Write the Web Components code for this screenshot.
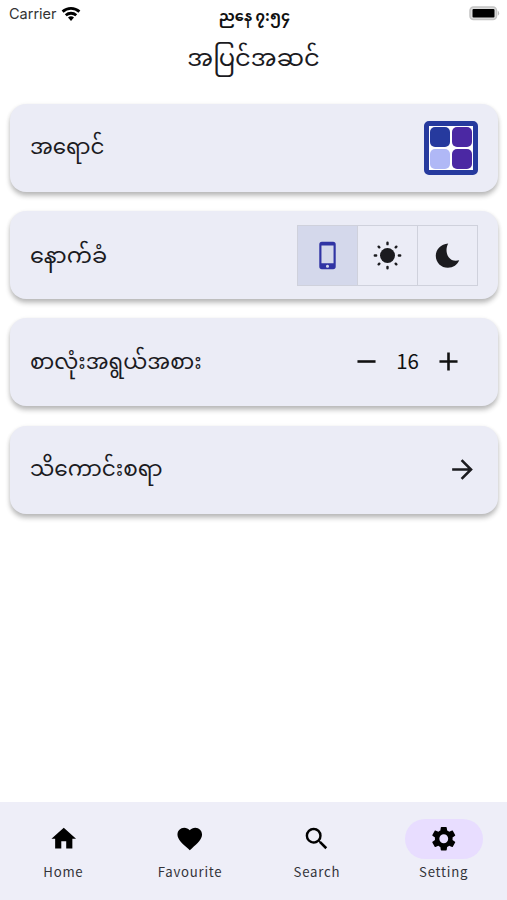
<!DOCTYPE html>
<html lang="my">
<head>
<meta charset="utf-8">
<title>Settings</title>
<style>
  html, body { margin: 0; height: 100%; }
  body {
    background: #fff;
    color: #1b1b1f;
    font-family: "Noto Sans CJK SC", "Noto Sans Myanmar", "Noto Sans", sans-serif;
  }
</style>
</head>
<body>
<settings-app></settings-app>

<script>
var ICONS = {
  home: '<path d="M10 20v-6h4v6h5v-8h3L12 3 2 12h3v8z"/>',
  heart: '<path d="M12 21.35l-1.45-1.32C5.4 15.36 2 12.28 2 8.5 2 5.42 4.42 3 7.5 3c1.74 0 3.41.81 4.5 2.09C13.09 3.81 14.76 3 16.5 3 19.58 3 22 5.42 22 8.5c0 3.78-3.4 6.86-8.55 11.54L12 21.35z"/>',
  search: '<path d="M15.5 14h-.79l-.28-.27A6.47 6.47 0 0 0 16 9.5 6.5 6.5 0 1 0 9.5 16c1.61 0 3.09-.59 4.23-1.57l.27.28v.79l5 4.99L20.49 19l-4.99-5zm-6 0C7.01 14 5 11.99 5 9.5S7.01 5 9.5 5 14 7.01 14 9.5 11.99 14 9.5 14z"/>',
  gear: '<path d="M19.14 12.94c.04-.3.06-.61.06-.94 0-.32-.02-.64-.07-.94l2.03-1.58c.18-.14.23-.41.12-.61l-1.92-3.32c-.12-.22-.37-.29-.59-.22l-2.39.96c-.5-.38-1.03-.7-1.62-.94l-.36-2.54c-.04-.24-.24-.41-.48-.41h-3.84c-.24 0-.43.17-.47.41l-.36 2.54c-.59.24-1.13.57-1.62.94l-2.39-.96c-.22-.08-.47 0-.59.22L2.74 8.87c-.12.21-.08.47.12.61l2.03 1.58c-.05.3-.09.63-.09.94s.02.64.07.94l-2.03 1.58c-.18.14-.23.41-.12.61l1.92 3.32c.12.22.37.29.59.22l2.39-.96c.5.38 1.03.7 1.62.94l.36 2.54c.05.24.24.41.48.41h3.84c.24 0 .44-.17.47-.41l.36-2.54c.59-.24 1.13-.56 1.62-.94l2.39.96c.22.08.47 0 .59-.22l1.92-3.32c.12-.22.07-.47-.12-.61l-2.01-1.58zM12 15.6A3.6 3.6 0 1 1 12 8.4a3.6 3.6 0 0 1 0 7.2z"/>',
  phone: '<path fill-rule="evenodd" d="M7.400 .7h9.200A2.200 2.200 0 0 1 18.800 2.900v18.200a2.200 2.200 0 0 1-2.200 2.200H7.400A2.200 2.200 0 0 1 5.200 21.100V2.900A2.200 2.200 0 0 1 7.400 .7zM7 3.800v14.700h10V3.800zM12 19.600a1.300 1.300 0 1 0 0 2.600 1.300 1.300 0 0 0 0-2.600z"/>',
  sun: '<circle cx="12" cy="12" r="6.200"/><g fill="none" stroke="currentColor" stroke-width="2" stroke-linecap="round"><path d="M12 1.500v1.100M12 21.400v1.100M1.500 12h1.100M21.400 12h1.100M4.700 4.700l.5.500M18.800 18.800l.5.500M4.700 19.300l.5-.5M18.800 5.200l.5-.5"/></g>',
  moon: '<path d="M12.600 2C6.500 2.400 2.300 6.900 2.300 12.200c0 5.700 4.500 10 10 10 4.400 0 8-2.600 9.400-6.200-3.500 1-6.700.2-8.700-2.500C10.700 10.400 10.600 5.500 12.600 2z"/>',
  minus: '<path d="M5 11h14v2H5z"/>',
  plus: '<path d="M11 5h2v6h6v2h-6v6h-2v-6H5v-2h6z"/>',
  arrow: '<path d="M12 4l-1.410 1.410L16.170 11H4v2h12.170l-5.580 5.590L12 20l8-8z"/>',
  wifi: '<path d="M12 20.300l3.600-4a5.400 5.400 0 0 0-7.200 0z"/><g fill="none" stroke="currentColor" stroke-width="3.400"><path d="M1.900 9.100a15.200 15.200 0 0 1 20.200 0M5.700 13.500a9.600 9.600 0 0 1 12.600 0"/></g>'
};

function define(name, html) {
  var tmpl = document.createElement("template");
  tmpl.innerHTML = html;
  customElements.define(name, class extends HTMLElement {
    constructor() {
      super();
      this.attachShadow({ mode: "open" }).appendChild(tmpl.content.cloneNode(true));
    }
  });
}

class AppIcon extends HTMLElement {
  connectedCallback() {
    if (!this.shadowRoot) this.attachShadow({ mode: "open" });
    this.shadowRoot.innerHTML = `
      <style>
        :host { display: block; width: var(--size, 29.5px); height: var(--size, 29.5px); flex: none; }
        svg { display: block; width: 100%; height: 100%; fill: currentColor; }
      </style>
      <svg viewBox="0 0 24 24">${ICONS[this.getAttribute("name")]}</svg>`;
  }
}
customElements.define("app-icon", AppIcon);

define("status-bar", `
<style>
  :host {
    display: grid;
    grid-template-columns: 1fr auto 1fr;
    height: 26px;
    align-items: center;
    padding: 0 7px 0 9px;
    box-sizing: border-box;
    color: #111;
  }
  .carrier { display: flex; align-items: center; gap: 4px; font: 14.5px/20px Inter, sans-serif; color: #333; padding-top: 1px; }
  .carrier app-icon { --size: 20px; color: #000; }
  .time { font-size: 14.7px; line-height: 20px; font-weight: 700; padding-top: 4px; }
  .battery { justify-self: end; width: 31px; height: 15px; }
</style>
<div class="carrier"><span>Carrier</span><app-icon name="wifi"></app-icon></div>
<div class="time">ညနေ ၇:၅၄</div>
<svg class="battery" viewBox="0 0 31 15">
  <rect x="1" y="1" width="26.500" height="12.500" rx="3.500" fill="#ddd" stroke="#c4c4c4" stroke-width="1.500"/>
  <rect x="3.500" y="3" width="22" height="8.500" rx="1" fill="#000"/>
  <path d="M28.800 4.800a3 3 0 0 1 0 5z" fill="#bbb"/>
</svg>
`);

define("setting-card", `
<style>
  :host {
    display: flex;
    align-items: center;
    justify-content: space-between;
    height: 88px;
    box-sizing: border-box;
    padding: 0 20px;
    border-radius: 16px;
    background: #ebecf6;
    box-shadow: 0 4px 5px rgba(0, 0, 0, .24), 0 1px 4px rgba(0, 0, 0, .08);
  }
  .label { font-size: var(--label-size, 21.400px); line-height: 36px; white-space: nowrap; padding-bottom: 5px; }
</style>
<div class="label"><slot></slot></div>
<slot name="control"></slot>
`);

define("color-palette", `
<style>
  :host {
    display: grid;
    grid-template-columns: 20px 20px;
    grid-auto-rows: 20px;
    gap: 2px;
    place-content: center;
    width: 54px;
    height: 54px;
    box-sizing: border-box;
    border: 5px solid #263a9e;
    border-radius: 5px;
    background: #fff;
  }
  i { border-radius: 5px; background: #4b28a3; }
  .a { background: #263a9e; }
  .c { background: #b0b8f6; }
</style>
<i class="a"></i><i></i><i class="c"></i><i></i>
`);

define("theme-switch", `
<style>
  :host { display: flex; width: 181px; height: 61px; box-sizing: border-box; border: 1px solid #cfd1dc; }
  div { flex: 1; display: flex; align-items: center; justify-content: center; padding-right: 1px; }
  div + div { border-left: 1px solid #cfd1dc; }
  .on { background: #d4d8eb; color: #3034a4; }
  app-icon { --size: 29px; }
</style>
<div class="on"><app-icon name="phone"></app-icon></div>
<div><app-icon name="sun"></app-icon></div>
<div><app-icon name="moon"></app-icon></div>
`);

define("font-stepper", `
<style>
  :host { display: flex; align-items: center; gap: 14px; padding: 0 14px 1px 0; color: #111; }
  app-icon { --size: 31px; }
  span { font-size: 20.5px; line-height: 30px; padding-bottom: 4px; }
</style>
<app-icon name="minus"></app-icon><span>16</span><app-icon name="plus"></app-icon>
`);

define("nav-item", `
<style>
  :host { flex: 1; display: flex; flex-direction: column; align-items: center; color: #000; }
  .pill { width: 78px; height: 40px; border-radius: 20px; display: flex; align-items: center; justify-content: center; }
  :host([active]) .pill { background: #e8ddff; }
  .text { margin-top: 3px; font-size: 13.2px; line-height: 20px; letter-spacing: .75px; color: #333339; }
</style>
<div class="pill"><slot name="icon"></slot></div>
<div class="text"><slot></slot></div>
`);

define("settings-app", `
<style>
  :host { display: flex; flex-direction: column; height: 100vh; }
  h1 { margin: 0; height: 77.7px; font-size: 24.2px; font-weight: 400; line-height: 59px; text-align: center; }
  main { flex: 1; display: flex; flex-direction: column; gap: 19.400px; padding: 0 9px 0 10px; }
  nav { display: flex; height: 98px; padding-top: 17px; box-sizing: border-box; background: #eeeef8; }
  .arrow { --size: 31px; }
</style>
<status-bar></status-bar>
<h1>အပြင်အဆင်</h1>
<main>
  <setting-card>အရောင်<color-palette slot="control"></color-palette></setting-card>
  <setting-card style="--label-size: 22.400px">နောက်ခံ<theme-switch slot="control"></theme-switch></setting-card>
  <setting-card>စာလုံးအရွယ်အစား<font-stepper slot="control"></font-stepper></setting-card>
  <setting-card style="--label-size: 21.600px">သိကောင်းစရာ<app-icon class="arrow" slot="control" name="arrow"></app-icon></setting-card>
</main>
<nav>
  <nav-item><app-icon slot="icon" name="home"></app-icon>Home</nav-item>
  <nav-item><app-icon slot="icon" name="heart"></app-icon>Favourite</nav-item>
  <nav-item><app-icon slot="icon" name="search"></app-icon>Search</nav-item>
  <nav-item active><app-icon slot="icon" name="gear"></app-icon>Setting</nav-item>
</nav>
`);
</script>
</body>
</html>
